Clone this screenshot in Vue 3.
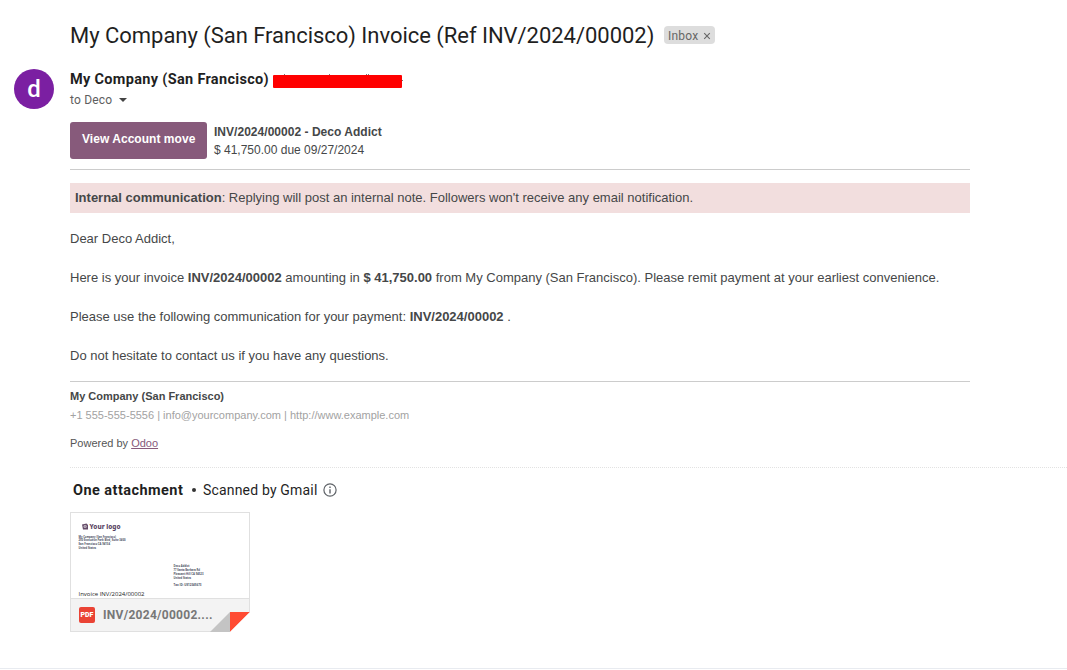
<script setup>
const issuer = [['My Company (San Francisco)', 37.5], ['250 Executive Park Blvd, Suite 3400', 47], ['San Francisco CA 94134', 31.5], ['United States', 17.5]]
const customer = [['Deco Addict', 16], ['77 Santa Barbara Rd', 26.5], ['Pleasant Hill CA 94523', 30], ['United States', 17.5]]
</script>

<template>
  <div class="page">
    <header class="subject">
      <h1>My Company (San Francisco) Invoice (Ref INV/2024/00002)</h1>
      <span class="chip"><span class="chip-name">Inbox</span>
        <svg width="8" height="8" viewBox="0 0 8 8"><path d="M1.200 1.200L6.800 6.800M6.800 1.200L1.200 6.800" stroke="#666" stroke-width="1.100" /></svg>
      </span>
    </header>

    <section class="sender">
      <div class="avatar">d</div>
      <div class="who">
        <div class="from"><b>My Company (San Francisco)</b><i class="redacted"><i class="t a"></i><i class="t b"></i><i class="t c"></i><i class="t d"></i><i class="t e"></i></i></div>
        <div class="to"><span>to Deco</span>
          <svg width="8" height="4" viewBox="0 0 8 4"><path d="M0 0H8L4 4Z" fill="#444" /></svg>
        </div>
      </div>
    </section>

    <main class="mail">
      <div class="summary">
        <a class="button">View Account move</a>
        <div class="record"><b>INV/2024/00002 - Deco Addict</b><br />$ 41,750.00 due 09/27/2024</div>
      </div>
      <div class="notice"><b>Internal communication</b>: Replying will post an internal note. Followers won't receive any email notification.</div>
      <div class="body">
        <p>Dear Deco Addict,</p>
        <p>Here is your invoice <b>INV/2024/00002</b> amounting in <b>$ 41,750.00</b> from My Company (San Francisco). Please remit payment at your earliest convenience.</p>
        <p>Please use the following communication for your payment: <b>INV/2024/00002</b> .</p>
        <p>Do not hesitate to contact us if you have any questions.</p>
      </div>
      <footer class="foot">
        <div class="company">My Company (San Francisco)</div>
        <div class="contact">+1 555-555-5556 | info@yourcompany.com | http://www.example.com</div>
        <div class="powered">Powered by <a>Odoo</a></div>
      </footer>
    </main>

    <section class="attachments">
      <div class="att-head">
        <b>One attachment</b><span class="dot"></span><span class="scan">Scanned by Gmail</span>
        <svg width="14" height="14" viewBox="0 0 14 14"><circle cx="7" cy="7" r="6.1" fill="none" stroke="#5f6368" stroke-width="1.2" /><path d="M7 6.2V10.4M7 3.6V5" stroke="#5f6368" stroke-width="1.4" /></svg>
      </div>
      <div class="card">
        <svg class="preview" width="178" height="85" viewBox="0 0 178 85">
          <path d="M11 11.5l4.500-1 1.500 1.500v4.500h-5z" fill="#644b68" /><path d="M13 12.700h2.200v1.600h-2.200z" stroke="#fff" stroke-width=".6" fill="none" />
          <text x="18.500" y="15.800" class="logo" textLength="31" lengthAdjust="spacingAndGlyphs">Your logo</text>
          <text v-for="([line, width], i) in issuer" :key="line" x="7.500" :y="24.500 + i * 3.900" class="tiny" :textLength="width" lengthAdjust="spacingAndGlyphs">{{ line }}</text>
          <text v-for="([line, width], i) in customer" :key="line" x="102.500" :y="54 + i * 3.900" class="tiny" :textLength="width" lengthAdjust="spacingAndGlyphs">{{ line }}</text>
          <text x="102.500" y="72.500" class="tiny" textLength="28" lengthAdjust="spacingAndGlyphs">Tax ID: US12345673</text>
          <text x="7.500" y="83.300" class="invoice" textLength="66" lengthAdjust="spacingAndGlyphs">Invoice INV/2024/00002</text>
        </svg>
        <div class="file"><span class="pdf">PDF</span><span class="name">INV/2024/00002....</span></div>
        <svg class="fold" width="40" height="20" viewBox="0 0 40 20"><path d="M0 20L20 0V20Z" fill="#c4c4c4" /><path d="M20 0H40L20 20Z" fill="#ff4b33" /><path d="M40 0V20H20Z" fill="#fff" /></svg>
      </div>
    </section>
  </div>
</template>

<style>
body { margin: 0; background: #fff; overflow: hidden; }
</style>
<style scoped>
.page { box-sizing: border-box; height: 669px; padding-top: 20px; border-bottom: 1px solid #e8ebf0; font-family: Roboto, sans-serif; color: #1f1f1f; }
.subject { display: flex; align-items: center; height: 30px; padding-left: 70px; }
h1 { margin: 2px 0 0; width: 594px; font: 400 22px/30px Roboto, sans-serif; white-space: nowrap; letter-spacing: -.03px; }
.chip { display: flex; align-items: center; gap: 4px; box-sizing: border-box; width: 51px; height: 18px; padding-left: 4px; background: #ddd; border-radius: 4px; color: #666; font-size: 12px; }
.chip-name { width: 31px; padding-top: 1px; letter-spacing: .2px; }
.chip svg { margin-top: 2px; }
.sender { display: flex; height: 54px; margin-top: 18px; padding-left: 14px; }
.avatar { width: 40px; height: 40px; margin-top: 1px; border-radius: 50%; background: #7b1fa2; color: #fff; font: 500 24px/40px Roboto, sans-serif; text-align: center; }
.who { margin-left: 16px; }
.from { display: flex; height: 22px; line-height: 24px; font-size: 14.500px; }
.from b { width: 203px; white-space: nowrap; letter-spacing: .32px; }
.redacted { position: relative; width: 129px; height: 13px; margin-top: 7px; background: #f00; border-radius: 1px; }
.t { position: absolute; top: -1px; width: 1px; height: 1px; background: #777; }
.a { left: 11px; } .b { left: 56px; } .c { left: 93px; } .d { left: 95px; } .e { left: 129px; top: 5px; }
.to { display: flex; align-items: center; gap: 7px; height: 20px; color: #5e5e5e; font-size: 12px; letter-spacing: .2px; }
.to svg { margin-top: -1px; }
.mail { width: 900px; margin-left: 70px; font: 13px/18px "Liberation Sans", Arial, sans-serif; color: #454748; }
.summary { display: flex; height: 47px; border-bottom: 1px solid #ccc; }
.button { box-sizing: border-box; width: 137px; height: 37px; padding: 8px 0 0 12px; border-radius: 3px; background: #875a7b; color: #fff; font: bold 12px/18px "Liberation Sans", Arial, sans-serif; white-space: nowrap; letter-spacing: .04px; }
.record { margin: 1px 0 0 7px; font-size: 12px; }
.record b { letter-spacing: .03px; }
.notice { box-sizing: border-box; height: 30px; margin-top: 13px; padding: 5px; line-height: 20px; background: #f2dede; }
.body { height: 168px; padding-top: 15px; box-sizing: border-box; border-bottom: 1px solid #ccc; margin-top: 1px; }
.body p { margin: 0 0 19px; line-height: 20px; }
.foot { height: 85px; font-size: 11px; }
.company { padding-top: 5px; font-weight: bold; line-height: 19px; }
.contact { line-height: 19px; color: #a2a2a2; }
.powered { margin-top: 9px; line-height: 19px; color: #555; }
.powered a { color: #875a7b; text-decoration: underline; }
.attachments { margin-left: 70px; border-top: 1px dotted #e2e2e2; }
.att-head { display: flex; align-items: center; height: 44px; padding-left: 3px; font-size: 14px; }
.att-head b { width: 119px; white-space: nowrap; font-size: 14.500px; letter-spacing: .45px; }
.dot { width: 4px; height: 4px; margin: 0 7px 0 0; border-radius: 50%; background: #333; }
.scan { width: 120px; white-space: nowrap; letter-spacing: .18px; }
.card { position: relative; box-sizing: border-box; width: 180px; height: 120px; border: 1px solid #e0e0e0; }
.preview { display: block; }
.logo { font: 800 6.500px "Noto Sans", sans-serif; fill: #594463; }
.tiny { font: 700 2.900px "Open Sans", sans-serif; fill: #4a4f62; }
.invoice { font: 6px "Open Sans", sans-serif; fill: #222; }
.file { display: flex; align-items: center; box-sizing: border-box; height: 33px; padding-left: 8px; border-top: 1px solid #e0e0e0; background: #f3f3f3; }
.pdf { width: 16px; height: 16px; border-radius: 2px; background: #ea4335; color: #fff; font: 900 7px/16px Roboto, sans-serif; text-align: center; }
.name { margin: 0 0 0 8px; color: #777; font: bold 12px Roboto, sans-serif; letter-spacing: .28px; }
.fold { position: absolute; right: -1px; bottom: -1px; }
</style>
